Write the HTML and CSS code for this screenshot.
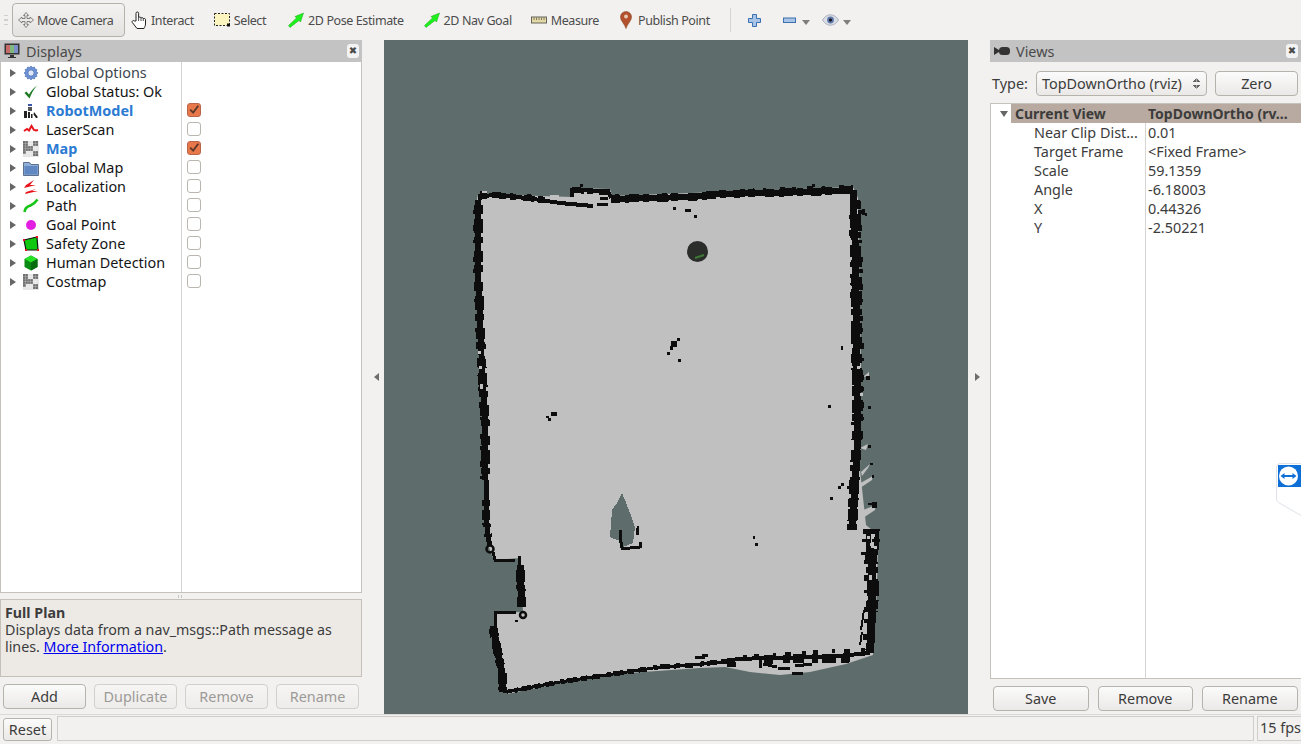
FILE: index.html
```html
<!DOCTYPE html>
<html lang="en">
<head>
<meta charset="utf-8">
<title>RViz</title>
<link rel="stylesheet" href="styles.css">
</head>
<body>
<div class="app">
  <header class="toolbar">
    <span class="grip"></span>
    <button class="tool tool-active">
      <svg class="ico" viewBox="0 0 16 16"><path d="M8 .5l2.500 3H9v3h3V5l3.500 3L12 11V9.500H9v3h1.500L8 15.500l-2.500-3H7v-3H4V11L.5 8 4 5v1.500h3v-3H5.500z" fill="#eceae8" stroke="#777" stroke-width=".9"/></svg>
      <span>Move Camera</span>
    </button>
    <button class="tool t-interact">
      <svg class="ico-hand" viewBox="0 0 16 18"><path d="M5 10V2.300a1.300 1.300 0 0 1 2.600 0V6.500c.8-.8 2.200-.5 2.400.5.8-.7 2.200-.4 2.300.6.9-.5 2.200-.1 2.200 1V13c0 2-1 3-1.500 4.500H6L1.300 11.500c-.8-1.300.9-2.700 2.100-1.500z" fill="#fff" stroke="#222"/><path d="M7.600 6.500V10M10 7V10M12.300 7.600V10" fill="none" stroke="#222" stroke-width=".8"/></svg>
      <span>Interact</span>
    </button>
    <button class="tool t-select">
      <svg class="ico" viewBox="0 0 16 16"><rect x=".5" y="1.500" width="15" height="12" fill="#fdf5bf" stroke="#222" stroke-dasharray="2 1.500"/><rect x="13" y="11.500" width="3" height="3" fill="#111"/></svg>
      <span>Select</span>
    </button>
    <button class="tool t-pose">
      <svg class="ico" viewBox="0 0 16 16"><path d="M.5 13.500L2 15.500l9-7 1.500 1.500L15.500 1 7 4.500 8.500 6z" fill="#1ef01e" stroke="#12a812" stroke-width=".5"/></svg>
      <span>2D Pose Estimate</span>
    </button>
    <button class="tool t-nav">
      <svg class="ico" viewBox="0 0 16 16"><path d="M.5 13.500L2 15.500l9-7 1.500 1.500L15.500 1 7 4.500 8.500 6z" fill="#1ef01e" stroke="#12a812" stroke-width=".5"/></svg>
      <span>2D Nav Goal</span>
    </button>
    <button class="tool t-measure">
      <svg class="ico" viewBox="0 0 16 16"><rect x=".5" y="5" width="15" height="6" fill="#e3d9a4" stroke="#66645a"/><path d="M3 5.500V8M5.500 5.500V8M8 5.500V8M10.500 5.500V8M13 5.500V8" stroke="#66645a" stroke-width=".8"/></svg>
      <span>Measure</span>
    </button>
    <button class="tool t-publish">
      <svg class="pin" viewBox="0 0 12 18"><path d="M6 17.500C4.500 12.500.5 10 .5 6a5.500 5.500 0 0 1 11 0c0 4-4 6.500-5.500 11.500z" fill="#b3502e" stroke="#8a4a25" stroke-width=".6"/><circle cx="6" cy="5.500" r="1.900" fill="#e8c9b5"/></svg>
      <span>Publish Point</span>
    </button>
    <span class="tool-sep"></span>
    <button class="mini t-plus">
      <svg class="ico-s" viewBox="0 0 13 13"><path d="M4.500.5h4v4h4v4h-4v4h-4v-4h-4v-4h4z" fill="#a9c4e6" stroke="#3a70b0"/></svg>
    </button>
    <button class="mini t-minus">
      <svg class="ico-s" viewBox="0 0 13 13"><rect x=".5" y="4" width="12" height="4.500" fill="#a9c4e6" stroke="#3a70b0"/></svg>
      <span class="caret"></span>
    </button>
    <button class="mini t-eye">
      <svg class="ico-eye" viewBox="0 0 17 12"><path d="M.5 6C3 2 6 .8 8.500.8S14 2 16.500 6C14 10 11 11.200 8.500 11.200S3 10 .5 6z" fill="#d9dde6" stroke="#9aa0ae" stroke-width=".8"/><circle cx="8.500" cy="6" r="3.400" fill="#5f76a8"/><circle cx="8.500" cy="6" r="1.500" fill="#111"/></svg>
      <span class="caret"></span>
    </button>
  </header>

  <main class="workspace">
    <aside class="dock dock-left">
      <div class="dock-title">
        <svg class="ico" viewBox="0 0 16 16"><rect x=".5" y=".5" width="15" height="11" fill="#333"/><rect x="2" y="2" width="4" height="8" fill="#c86a6a"/><rect x="6" y="2" width="4" height="8" fill="#7fb77f"/><rect x="10" y="2" width="4" height="8" fill="#7d8fc8"/><path d="M6 12h4v2h2v1H4v-1h2z" fill="#333"/></svg>
        <span class="dock-name">Displays</span>
        <span class="dock-close">&#10006;</span>
      </div>
      <div class="tree tree-displays">
        <div class="row"><span class="arrow"></span>
          <svg class="ico" viewBox="0 0 16 16"><path d="M8 1l1.400 1.600 2-.6.500 2 2 .5-.6 2L15 8l-1.700 1.400.6 2-2 .5-.5 2-2-.6L8 15l-1.400-1.700-2 .6-.5-2-2-.5.6-2L1 8l1.700-1.500-.6-2 2-.5.5-2 2 .6z" fill="#6d93d6" stroke="#3f66ae" stroke-width=".6"/><circle cx="8" cy="8" r="3.200" fill="#dfe8f8" stroke="#3f66ae" stroke-width=".8"/></svg>
          <span class="name">Global Options</span></div>
        <div class="row"><span class="arrow"></span>
          <svg class="ico" viewBox="0 0 16 16"><path d="M1.500 9l2-1.500 2.500 3C8 7 10.500 4 14 1.500 11 5 8.500 9 6.500 14.500z" fill="#1d7a22"/></svg>
          <span class="name name-strong">Global Status: Ok</span></div>
        <div class="row"><span class="arrow"></span>
          <svg class="ico" viewBox="0 0 16 16"><rect x="5" y="1" width="4" height="2" fill="#3a55a8"/><rect x="5" y="4" width="4" height="4" fill="#555"/><path d="M1 15V8h3v7zm4 0V9h2v6zm3 0v-4h1.500v4zM11 9l3.500 4.500V15h-1.500l-2.500-3.500z" fill="#222"/></svg>
          <span class="name name-on">RobotModel</span>
          <span class="check check-on"><svg viewBox="0 0 14 14"><path d="M2.500 6.500L6 10l6-8" fill="none" stroke="#5c3a2a" stroke-width="2.200"/></svg></span></div>
        <div class="row"><span class="arrow"></span>
          <svg class="ico" viewBox="0 0 16 16"><path d="M1 9l3-2 2 1.500L8.500 4l2.500 4 2 .5 2-.5" fill="none" stroke="#e8141c" stroke-width="2"/></svg>
          <span class="name name-strong">LaserScan</span>
          <span class="check"></span></div>
        <div class="row"><span class="arrow"></span>
          <svg class="ico" viewBox="0 0 16 16"><rect width="16" height="16" fill="#e4e4e4"/><path d="M0 0h5v5H0zM5 5h5V0h0v10H0V5zM10 0h5v5h-5zM10 10h5v5h-5zM0 10h3v3H0z" fill="#6f6f6f"/><path d="M2.500 0v16M5 0v16M7.500 0v16M10 0v16M12.500 0v16M0 2.500h16M0 5h16M0 7.500h16M0 10h16M0 12.500h16" stroke="#fff" stroke-width=".4" opacity=".6"/></svg>
          <span class="name name-on">Map</span>
          <span class="check check-on"><svg viewBox="0 0 14 14"><path d="M2.500 6.500L6 10l6-8" fill="none" stroke="#5c3a2a" stroke-width="2.200"/></svg></span></div>
        <div class="row"><span class="arrow"></span>
          <svg class="ico" viewBox="0 0 16 16"><path d="M.5 2.500h6l1.500 2h7.500v11H.5z" fill="#8faed6" stroke="#5c6f8c"/><rect x="1.500" y="6" width="13" height="8.500" fill="#5f88c2"/></svg>
          <span class="name name-strong">Global Map</span>
          <span class="check"></span></div>
        <div class="row"><span class="arrow"></span>
          <svg class="ico" viewBox="0 0 16 16"><path d="M3 6l8-5-4 5h6L1 9zM3 13l10-3-4 2h6L2 15z" fill="#e8141c"/></svg>
          <span class="name name-strong">Localization</span>
          <span class="check"></span></div>
        <div class="row"><span class="arrow"></span>
          <svg class="ico" viewBox="0 0 16 16"><path d="M1.500 14c.5-5 3.500-5.500 6-6.500S12 5 14.500 1.500" fill="none" stroke="#17c517" stroke-width="2.600"/></svg>
          <span class="name name-strong">Path</span>
          <span class="check"></span></div>
        <div class="row"><span class="arrow"></span>
          <svg class="ico" viewBox="0 0 16 16"><circle cx="8" cy="8" r="5" fill="#e21fe2"/></svg>
          <span class="name name-strong">Goal Point</span>
          <span class="check"></span></div>
        <div class="row"><span class="arrow"></span>
          <svg class="ico" viewBox="0 0 16 16"><path d="M1 4l13-3 1 13H3z" fill="#0fc80f" stroke="#111" stroke-width="1.200"/><path d="M0 3h2v2H0zM13 0h2v2h-2zM14 13h2v2h-2zM2 13h2v2H2z" fill="#e8141c"/></svg>
          <span class="name name-strong">Safety Zone</span>
          <span class="check"></span></div>
        <div class="row"><span class="arrow"></span>
          <svg class="ico" viewBox="0 0 16 16"><path d="M8 .5l6.500 3.500v8L8 15.500 1.500 12V4z" fill="#0b8a14"/><path d="M8 .5l6.500 3.500L8 7.500 1.500 4z" fill="#27e127"/><path d="M8 7.500l6.500-3.500v8L8 15.500z" fill="#066a0e"/></svg>
          <span class="name name-strong">Human Detection</span>
          <span class="check"></span></div>
        <div class="row"><span class="arrow"></span>
          <svg class="ico" viewBox="0 0 16 16"><rect width="16" height="16" fill="#e4e4e4"/><path d="M0 0h5v5H0zM5 5h5V0h0v10H0V5zM10 0h5v5h-5zM10 10h5v5h-5zM0 10h3v3H0z" fill="#6f6f6f"/><path d="M2.500 0v16M5 0v16M7.500 0v16M10 0v16M12.500 0v16M0 2.500h16M0 5h16M0 7.500h16M0 10h16M0 12.500h16" stroke="#fff" stroke-width=".4" opacity=".6"/></svg>
          <span class="name name-strong">Costmap</span>
          <span class="check"></span></div>
      </div>
      <div class="split-h"><span></span></div>
      <div class="desc">
        <strong>Full Plan</strong>
        <p>Displays data from a nav_msgs::Path message as lines. <a href="#">More Information</a>.</p>
      </div>
      <div class="btn-row btn-row-left">
        <button class="btn">Add</button>
        <button class="btn btn-off">Duplicate</button>
        <button class="btn btn-off">Remove</button>
        <button class="btn btn-off">Rename</button>
      </div>
    </aside>

    <div class="gutter"><span class="tri tri-left"></span></div>

    <section class="viewport">
      <svg class="map" viewBox="384 40 584 674">
        <!-- free space -->
        <path class="free" d="M478 194L572 197V188L610 189 612 196 853 187 858 198 861 370 860 470 866 525 878 535 877 590 873 655 846 664 810 672 780 675 750 672 725 667 700 668 600 675 507 694 495 613 523 612 520 558 494 560 486 540 475 210z"/>
        <path class="free" d="M858 512L876 505 875 510 860 520zM857 485L873 476 872 480 860 488zM861 472L870 464 868 468 862 476zM863 377L869 372V376zM862 410L869 405zM860 448L868 444 866 450z"/>
        <!-- unknown cone -->
        <path class="unk" d="M622 493L617 503 612 510 610 537 617 540 620 540 623 547 633 543 635 527 630 513 625 500z"/>
        <!-- walls: core line + irregular thicker blocks -->
        <g class="walls">
          <path class="w4" d="M478 197L493 195 527 198 560 203 593 206"/>
          <path class="w6 d1" d="M478 197L493 195 527 198 550 201"/>
          <path class="w4 d4" d="M480 193L527 196 548 199"/>
          <path class="w4" d="M572 197V190L608 191 611 198"/>
          <path class="w6 d2" d="M572 190L608 192"/>
          <path class="w3" d="M600 198H608M597 204H608"/>
          <path class="w6" d="M611 199L647 198 693 197 720 194 760 193 810 192 853 190"/>
          <path class="w8 d1" d="M611 199L647 198 693 197 720 194 760 193 810 192 853 190"/>
          <path class="w4 d4" d="M615 196L693 195 760 190 853 187"/>
          <path class="w7" d="M853 190L855 240 856 300 857 370"/>
          <path class="w11 d1" d="M855 200L856 260 857 370 858 400 857 440"/>
          <path class="w4 d4" d="M860 210L861 300 862 380 862 430"/>
          <path class="w4 d4" d="M851 215L853 300 854 390 853 440"/>
          <path class="w7" d="M857 370L858 410 857 450 855 490 852 530"/>
          <path class="w10 d2" d="M856 450L854 490 852 530"/>
          <path class="w8" d="M871 548L872 580 872 613 870 653"/>
          <path class="w12 d2" d="M871 552L873 590 872 612"/>
          <path class="w4 d4" d="M866 560L866 610 865 650"/>
          <path class="w5" d="M863 531H877L876 550H868V534"/>
          <path class="w3 d3" d="M862 540H880M861 553H878"/>
          <path class="w2" d="M864 610L861 630M862 632L860 645M868 504H874M873 502V508"/>
          <path class="w4" d="M870 653L827 657 760 658 727 660"/>
          <path class="w9 d1" d="M850 658L790 659 760 659"/>
          <path class="w4 d4" d="M865 650L800 653 735 658"/>
          <path class="w3" d="M727 662L693 665 660 667 627 672 593 677 560 682 527 688 507 692"/>
          <path class="w5 d3" d="M727 661L693 665 660 667 627 672 593 677 560 682 527 688 507 692"/>
          <path class="w3" d="M760 660V668M763 664L777 667M795 666L812 664M778 668H790M792 673H803M695 657H705M702 655H708"/>
          <path class="w5" d="M727 664H736"/>
          <path class="w6" d="M478 200L478 270 480 320 482 367 485 420 485 480"/>
          <path class="w9 d1" d="M478 205L478 270 480 320 482 367 485 420 485 480"/>
          <path class="w4 d4" d="M475 210L475 270 477 320 479 367 482 420 482 480"/>
          <path class="w5" d="M486 480L486 513 488 537 490 546"/>
          <path class="w8 d3" d="M486 500L486 520 488 537"/>
          <path class="w3" d="M493 552L495 560H515M519 556V565"/>
          <path class="w7" d="M520 565L522 607"/>
          <path class="w9 d2" d="M520 570L522 607"/>
          <path class="w3" d="M495 626V612H516"/>
          <path class="w7" d="M493 626L498 653 502 673 503 692"/>
          <path class="w9 d1" d="M493 628L498 653 502 673 503 690"/>
          <path class="w3" d="M507 692V690M503 692L520 689"/>
          <path class="w3" d="M620 530V537L622 548H630L640 547V542M637 528V535"/>
          <path class="w5" d="M636.500 528H639"/>
        </g>
        <circle class="ring" cx="490" cy="549" r="3.500"/>
        <circle class="ring" cx="523" cy="615" r="3"/>
        <g class="specks">
          <rect x="673" y="207" width="3" height="3"/><rect x="685" y="209" width="6" height="3"/><rect x="694" y="215" width="3" height="3"/>
          <rect x="671" y="341" width="6" height="6"/><rect x="670" y="346" width="3" height="4"/><rect x="667" y="352" width="3" height="3"/><rect x="678" y="359" width="3" height="3"/><rect x="677" y="338" width="3" height="3"/>
          <rect x="546" y="416" width="3" height="2"/><rect x="548" y="418" width="3" height="3"/><rect x="551" y="412" width="6" height="4"/>
          <rect x="841" y="346" width="2" height="4"/><rect x="850" y="283" width="4" height="2"/><rect x="850" y="292" width="3" height="6"/>
          <rect x="828" y="405" width="3" height="3"/><rect x="830" y="497" width="3" height="3"/><rect x="838" y="486" width="3" height="3"/><rect x="841" y="483" width="3" height="3"/><rect x="847" y="486" width="3" height="3"/>
          <rect x="753" y="536" width="2" height="3"/><rect x="755" y="543" width="3" height="3"/>
          <rect x="866" y="376" width="4" height="4"/><rect x="868" y="406" width="3" height="3"/><rect x="868" y="445" width="3" height="3"/><rect x="870" y="463" width="3" height="2"/><rect x="872" y="475" width="2" height="3"/>
          <rect x="580" y="184" width="3" height="3"/><rect x="812" y="184" width="3" height="3"/><rect x="862" y="209" width="3" height="6"/><rect x="865" y="213" width="2" height="3"/>
          <rect x="515" y="620" width="3" height="2"/><rect x="873" y="502" width="4" height="6"/>
        </g>
        <g class="flecks">
          <rect x="478" y="351" width="3" height="3"/><rect x="479" y="366" width="3" height="3"/><rect x="480" y="384" width="3" height="5"/>
          <rect x="482" y="191" width="5" height="2"/><rect x="550" y="195" width="9" height="3"/><rect x="857" y="366" width="3" height="3"/><rect x="860" y="393" width="3" height="3"/>
          <rect x="867" y="536" width="3" height="3"/><rect x="872" y="534" width="3" height="3"/><rect x="870" y="543" width="3" height="3"/><rect x="874" y="546" width="3" height="3"/><rect x="869" y="575" width="3" height="5"/>
        </g>
        <circle class="robot" cx="697.500" cy="251.500" r="10.500"/>
        <path class="robot-mark" d="M695 258L704 255"/>
      </svg>
    </section>

    <div class="gutter"><span class="tri tri-right"></span></div>

    <aside class="dock dock-right">
      <div class="dock-title">
        <svg class="ico-cam" viewBox="0 0 16 10"><path d="M0 1l5 3V6L0 9z" fill="#333"/><rect x="5" y="1" width="11" height="8" rx="3.500" fill="#333"/></svg>
        <span class="dock-name">Views</span>
        <span class="dock-close">&#10006;</span>
      </div>
      <div class="type-row">
        <span class="type-label">Type:</span>
        <div class="combo"><span>TopDownOrtho (rviz)</span><span class="spin"></span></div>
        <button class="btn btn-zero">Zero</button>
      </div>
      <div class="tree tree-views">
        <div class="row view-head"><span class="arrow-down"></span><span class="view-k">Current View</span><span class="view-v">TopDownOrtho (rv...</span></div>
        <div class="row"><span class="view-k view-k-in">Near Clip Dist...</span><span class="view-v">0.01</span></div>
        <div class="row"><span class="view-k view-k-in">Target Frame</span><span class="view-v">&lt;Fixed Frame&gt;</span></div>
        <div class="row"><span class="view-k view-k-in">Scale</span><span class="view-v">59.1359</span></div>
        <div class="row"><span class="view-k view-k-in">Angle</span><span class="view-v">-6.18003</span></div>
        <div class="row"><span class="view-k view-k-in">X</span><span class="view-v">0.44326</span></div>
        <div class="row"><span class="view-k view-k-in">Y</span><span class="view-v">-2.50221</span></div>
      </div>
      <div class="btn-row btn-row-right">
        <button class="btn">Save</button>
        <button class="btn">Remove</button>
        <button class="btn">Rename</button>
      </div>
      <svg class="tv-tab" viewBox="0 0 25 53">
        <path d="M25 .5H4Q.5.500.5 4v32q0 2 2 3.500L25 52.500" fill="#fff" stroke="#dfe3e8"/>
        <rect x="2" y="2" width="23" height="22" fill="#0e6fd6"/><circle cx="12.500" cy="13" r="9.500" fill="#fff"/><path d="M4.500 13l4-3v2h8v-2l4 3-4 3v-2h-8v2z" fill="#0e6fd6"/>
      </svg>
    </aside>
  </main>

  <footer class="status">
    <button class="btn btn-reset">Reset</button>
    <div class="status-field"></div>
    <div class="status-fps">15 fps</div>
  </footer>
</div>
</body>
</html>
```

FILE: styles.css
```css
* { box-sizing: border-box; }
html, body { margin: 0; padding: 0; height: 100%; }
body {
  background: #f2f1f0;
  color: #3c3c3c;
  font-family: "Noto Sans", "Open Sans", sans-serif;
  font-size: 14.400px;
  overflow: hidden;
}
svg { display: block; flex: none; }
button { font: inherit; }
.app { display: flex; flex-direction: column; width: 1301px; height: 744px; }

/* toolbar */
.toolbar { height: 40px; display: flex; align-items: center; padding: 0 0 0 4px; flex: none; }
.grip { width: 4px; height: 10px; margin-right: 4px; border-top: 1px solid #d3d0cc; border-bottom: 1px solid #d3d0cc; background: linear-gradient(#f2f1f0 40%, #d3d0cc 40%, #d3d0cc 60%, #f2f1f0 60%); }
.tool { display: flex; align-items: center; gap: 4px; border: 0; background: none; padding: 0; color: #4c4c4c; height: 34px; font-size: 12.500px; letter-spacing: -.4px; }
.tool-active { width: 113px; padding-left: 5px; gap: 3px; border: 1px solid #b5b1ab; border-radius: 4px; background: linear-gradient(#f4f3f2, #e4e2df); }
.ico { width: 16px; height: 16px; }
.ico-hand { width: 16px; height: 18px; }
.pin { width: 12px; height: 18px; }
.t-interact { margin-left: 6px; }
.t-select { margin-left: 20px; }
.t-pose { margin-left: 22px; }
.t-nav { margin-left: 20px; }
.t-measure { margin-left: 19px; }
.t-publish { margin-left: 21px; gap: 6px; }
.tool-sep { width: 1px; height: 24px; background: #d8d6d3; margin-left: 20px; }
.mini { display: flex; align-items: center; border: 0; background: none; padding: 0; height: 20px; }
.ico-s { width: 13px; height: 13px; }
.ico-eye { width: 17px; height: 12px; }
.t-plus { margin-left: 17px; }
.t-minus { margin-left: 22px; gap: 6px; }
.t-eye { margin-left: 12px; gap: 4px; }
.caret { width: 0; height: 0; border-left: 4px solid transparent; border-right: 4px solid transparent; border-top: 5px solid #7e7e7e; margin-top: 5px; }

/* workspace */
.workspace { flex: 1; display: flex; min-height: 0; }
.dock { display: flex; flex-direction: column; position: relative; }
.dock-left { width: 362px; }
.dock-right { width: 311px; }
.gutter { width: 22px; display: flex; align-items: center; justify-content: center; }
.tri { width: 0; height: 0; border-top: 4px solid transparent; border-bottom: 4px solid transparent; }
.tri-left { border-right: 5px solid #6d6d6d; margin-left: 7px; }
.tri-right { border-left: 5px solid #6d6d6d; margin-right: 3px; }
.viewport { width: 584px; background: #5e6d6c; }
.map { width: 584px; height: 674px; }

.dock-title { height: 22px; flex: none; display: flex; align-items: center; background: #c3c3c3; padding: 0 4px; gap: 6px; color: #4a4a4a; }
.dock-name { flex: 1; }
.dock-close { width: 12px; height: 14px; margin-right: -1px; border-radius: 3px; background: #f3f3f3; color: #4a4a4a; font-size: 10px; line-height: 14px; text-align: center; font-family: "DejaVu Sans", sans-serif; }
.ico-cam { width: 16px; height: 10px; }

.tree { background: #fff; border: 1px solid #c5c2bc; min-height: 0; }
.tree-displays { flex: 1; border-top: 0; padding-top: 1px; background-image: linear-gradient(#d7d5d1, #d7d5d1); background-size: 1px 100%; background-position: 180px 0; background-repeat: no-repeat; }
.row { height: 19px; display: flex; align-items: center; position: relative; white-space: nowrap; }
.tree-displays .row { padding-left: 9px; }
.arrow { width: 0; height: 0; border-top: 4px solid transparent; border-bottom: 4px solid transparent; border-left: 6px solid #666; margin-right: 7px; }
.tree-displays .ico { margin-right: 7px; }
.name { width: 141px; color: #3d4650; flex: none; }
.name-strong { color: #141414; }
.name-on { color: #2b7bd3; font-weight: 700; }
.check { width: 14px; height: 14px; margin-top: -1px; border: 1px solid #b9b5af; border-radius: 3px; background: #fff; flex: none; }
.check-on { background: #e8784a; border-color: #b9654a; }
.check svg { width: 12px; height: 12px; }

.split-h { height: 6px; flex: none; display: flex; justify-content: center; align-items: center; }
.split-h span { width: 6px; height: 3px; background: repeating-linear-gradient(90deg, #c9c6c1 0 1px, transparent 1px 3px); }
.desc { height: 78px; flex: none; background: #edeae6; border: 1px solid #c5c1ba; padding: 4px 4px; line-height: 17px; font-size: 14.250px; color: #3c3c3c; }
.desc strong { display: block; }
.desc p { margin: 0; }
.desc a { color: #0000ee; }

.btn-row { display: flex; flex: none; }
.btn-row-left { padding: 7px 3px 5px; gap: 8px; height: 37px; }
.btn-row-left .btn { width: 83px; }
.btn-row-right { padding: 7px 3px 3px; gap: 9px; height: 35px; }
.btn-row-right .btn { width: 95.500px; }
.btn { height: 25px; border: 1px solid #b6b2ac; border-radius: 4px; background: linear-gradient(#fbfbfb, #ebe9e7); color: #3c3c3c; padding: 0; }
.btn-off { color: #9c9a97; border-color: #d3d0cc; background: linear-gradient(#f6f5f4, #eeecea); }

/* views */
.type-row { height: 41px; flex: none; display: flex; align-items: center; padding: 1px 3px 0 2px; }
.type-label { width: 44px; }
.combo { width: 171px; height: 25px; display: flex; align-items: center; justify-content: space-between; border: 1px solid #b6b2ac; border-radius: 4px; background: linear-gradient(#fbfbfb, #ebe9e7); padding: 0 6px 0 5px; }
.spin { width: 7px; height: 11px; background: linear-gradient(135deg, transparent 50%, #666 50%) left top/3.500px 4px no-repeat, linear-gradient(225deg, transparent 50%, #666 50%) right top/3.500px 4px no-repeat, linear-gradient(45deg, transparent 50%, #666 50%) left bottom/3.500px 4px no-repeat, linear-gradient(315deg, transparent 50%, #666 50%) right bottom/3.500px 4px no-repeat; }
.btn-zero { width: 83px; margin-left: 8px; }
.tree-views { flex: 1; border-right: 0; background-image: linear-gradient(#d7d5d1, #d7d5d1); background-size: 1px 100%; background-position: 154px 0; background-repeat: no-repeat; }
.view-head { background: linear-gradient(90deg, #fff 20px, #b8aaa0 20px); font-weight: 700; font-size: 14px; }
.arrow-down { position: absolute; left: 9px; top: 7px; width: 0; height: 0; border-left: 4px solid transparent; border-right: 4px solid transparent; border-top: 6px solid #666; }
.view-k { width: 155px; padding-left: 24px; flex: none; }
.view-k-in { padding-left: 43px; }
.view-v { padding-left: 2px; }

.tv-tab { position: absolute; right: 0; top: 423px; width: 25px; height: 53px; }

/* map */
.free { fill: #c0c0c0; }
.unk { fill: #5e6d6c; shape-rendering: crispEdges; }
.walls path { fill: none; stroke: #0d0d0d; shape-rendering: crispEdges; }
.w2 { stroke-width: 2; } .w3 { stroke-width: 3; } .w4 { stroke-width: 4; } .w5 { stroke-width: 5; }
.w6 { stroke-width: 6; } .w7 { stroke-width: 7; } .w8 { stroke-width: 8; } .w9 { stroke-width: 9; } .w10 { stroke-width: 10; } .w11 { stroke-width: 11; } .w12 { stroke-width: 12; }
.d1 { stroke-dasharray: 9 5 14 4 6 8 11 3 7 10; }
.d2 { stroke-dasharray: 12 3 6 6 17 4 9 2; }
.d3 { stroke-dasharray: 6 4 10 3 4 7 8 5; }
.d4 { stroke-dasharray: 4 11 6 9 3 14 5 7; }
.ring { fill: none; stroke: #0d0d0d; stroke-width: 2.500; }
.specks rect { fill: #0d0d0d; }
.flecks rect { fill: #c0c0c0; }
.robot { fill: #2b2d2b; }
.robot-mark { fill: none; stroke: #3c7a36; stroke-width: 2; }

/* status bar */
.status { height: 30px; flex: none; display: flex; align-items: flex-start; padding: 1px 0 0 3px; border-top: 1px solid #dbd9d6; }
.btn-reset { width: 49px; height: 23px; margin-top: 2px; border-radius: 3px; }
.status-field { width: 1197px; height: 25px; margin-left: 5px; border: 1px solid #d0cdc8; }
.status-fps { flex: 1; height: 25px; margin-left: 3px; border: 1px solid #d0cdc8; border-right: 0; padding-left: 2px; line-height: 21px; white-space: nowrap; }
```
